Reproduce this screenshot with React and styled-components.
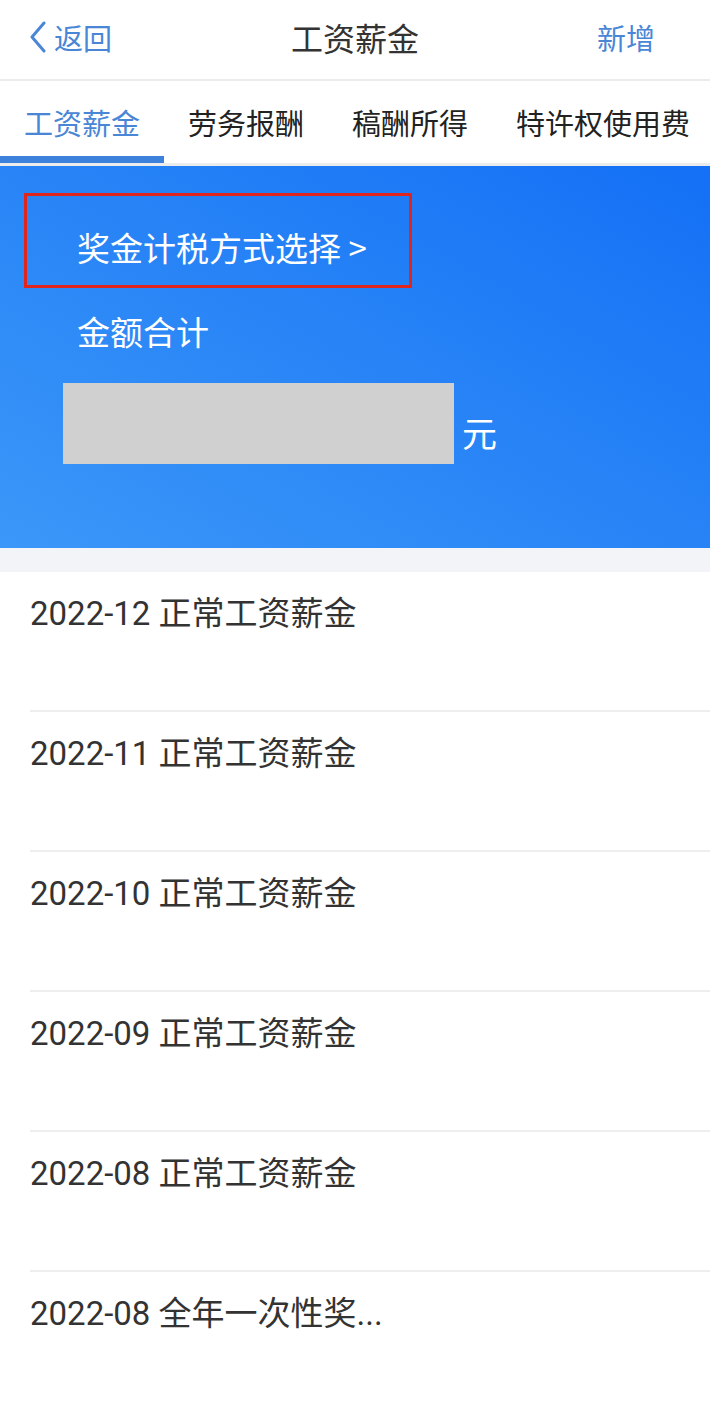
import React from "react";
import styled, { createGlobalStyle } from "styled-components";

const Global = createGlobalStyle`
  html, body { margin: 0; padding: 0; background: #ffffff; }
  body { font-family: Roboto, "Noto Sans CJK SC", sans-serif; }
  * { box-sizing: border-box; }
`;

const Page = styled.div`
  width: 710px;
  min-height: 1404px;
  background: #fff;
  display: flex;
  flex-direction: column;
`;

const NavBar = styled.header`
  height: 81px;
  display: grid;
  grid-template-columns: 1fr auto 1fr;
  align-items: center;
  padding: 0 28px 6px 28px;
  border-bottom: 2px solid #ececec;
`;

const NavLink = styled.div`
  display: flex;
  align-items: center;
  gap: 6px;
  justify-self: ${(p) => (p.$right ? "end" : "start")};
  margin-right: ${(p) => (p.$right ? "27px" : "0")};
  color: #4a86d6;
  font-size: 29px;
  font-family: "Noto Sans CJK SC", sans-serif;
`;

const Title = styled.h1`
  margin: 0;
  font-size: 32px;
  font-weight: 400;
  color: #333;
  font-family: "Noto Sans CJK SC", sans-serif;
`;

const Tabs = styled.nav`
  height: 85px;
  display: flex;
  align-items: stretch;
  overflow: hidden;
  border-bottom: 3px solid #ececec;
`;

const Tab = styled.div`
  position: relative;
  flex-shrink: 0;
  white-space: nowrap;
  display: flex;
  align-items: center;
  padding: 0 24px 0;
  font-size: 29px;
  font-family: "Noto Sans CJK SC", sans-serif;
  color: ${(p) => (p.$active ? "#4a86d6" : "#222")};
  &::after {
    content: "";
    display: ${(p) => (p.$active ? "block" : "none")};
    position: absolute;
    left: 0;
    right: 0;
    bottom: 0;
    height: 7px;
    background: #3c82dc;
  }
`;

const Banner = styled.section`
  height: 382px;
  background: linear-gradient(30deg, #3b97f8 0%, #2a86f6 45%, #1470f5 100%);
  padding: 27px 0 0 24px;
  display: flex;
  flex-direction: column;
`;

const Highlight = styled.div`
  width: 388px;
  height: 95px;
  border: 3px solid #e0251c;
  display: flex;
  align-items: center;
  padding: 12px 0 0 50px;
  color: #fff;
  font-size: 33px;
  font-family: "Noto Sans CJK SC", sans-serif;
`;

const Label = styled.div`
  margin: 19px 0 0 53px;
  color: #fff;
  font-size: 33px;
  line-height: 48px;
  font-family: "Noto Sans CJK SC", sans-serif;
`;

const AmountRow = styled.div`
  margin: 28px 0 0 39px;
  display: flex;
  align-items: flex-end;
  gap: 8px;
`;

const Masked = styled.div`
  width: 391px;
  height: 81px;
  background: #d0d0d0;
`;

const Unit = styled.span`
  color: #fff;
  font-size: 35px;
  line-height: 48px;
  margin-bottom: 8px;
  font-family: "Noto Sans CJK SC", sans-serif;
`;

const Gap = styled.div`
  height: 24px;
  background: #f3f4f7;
`;

const List = styled.ul`
  list-style: none;
  margin: 0;
  padding: 0 0 0 30px;
`;

const Row = styled.li`
  height: 140px;
  padding-top: 20px;
  border-bottom: ${(p) => (p.$last ? "none" : "2px solid #eeeeee")};
  font-size: 33px;
  color: #333;
  line-height: 44px;
  font-family: Roboto, "Noto Sans CJK SC", sans-serif;
`;

const Chevron = () => (
  <svg width="20" height="32" viewBox="0 0 20 32" fill="none">
    <path d="M16 2 L4 16 L16 30" stroke="#4a86d6" strokeWidth="3" strokeLinecap="round" strokeLinejoin="round" />
  </svg>
);

const tabs = [
  { label: "工资薪金", active: true },
  { label: "劳务报酬" },
  { label: "稿酬所得" },
  { label: "特许权使用费" },
];

const rows = [
  "2022-12 正常工资薪金",
  "2022-11 正常工资薪金",
  "2022-10 正常工资薪金",
  "2022-09 正常工资薪金",
  "2022-08 正常工资薪金",
  "2022-08 全年一次性奖...",
];

export default function App() {
  return (
    <Page>
      <Global />
      <NavBar>
        <NavLink>
          <Chevron />
          返回
        </NavLink>
        <Title>工资薪金</Title>
        <NavLink $right>新增</NavLink>
      </NavBar>
      <Tabs>
        {tabs.map((t) => (
          <Tab key={t.label} $active={t.active}>
            {t.label}
          </Tab>
        ))}
      </Tabs>
      <Banner>
        <Highlight>奖金计税方式选择 &gt;</Highlight>
        <Label>金额合计</Label>
        <AmountRow>
          <Masked />
          <Unit>元</Unit>
        </AmountRow>
      </Banner>
      <Gap />
      <List>
        {rows.map((r, i) => (
          <Row key={i} $last={i === rows.length - 1}>
            {r}
          </Row>
        ))}
      </List>
    </Page>
  );
}
